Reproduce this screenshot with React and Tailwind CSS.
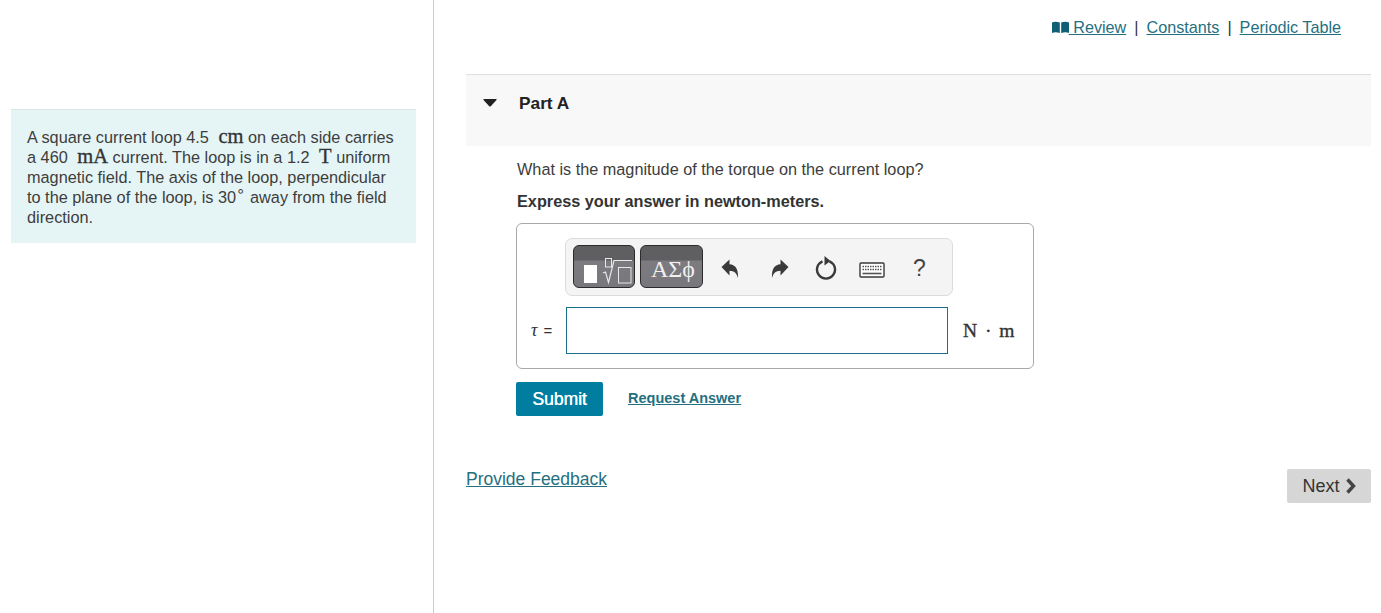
import React from "react";

const sans = { fontFamily: '"Liberation Sans", Arial, sans-serif' };

function Unit({ children, className = "" }) {
  return <span className={`font-['Liberation_Serif','DejaVu_Serif',serif] font-normal text-[20.5px] leading-[14px] text-[#333] [-webkit-text-stroke:0.35px_#333] ${className}`}>{children}</span>;
}

function Toolbar() {
  return (
    <div className="flex items-center h-[58px] w-[388px] ml-[48px] mt-[14px] pl-[7px] bg-[#f4f4f4] border border-[#dcdcdc] rounded-[7px]">
      <button className="relative shrink-0 w-[62px] h-[43px] mb-[1px] rounded-[6px] border border-[#2b2b2b] bg-[linear-gradient(#5f5f62_0,#5f5f62_14px,#7b7b80_15px,#77777c_100%)] overflow-hidden">
        <svg className="absolute left-0 top-0" width="60" height="41" viewBox="0 0 60 41" fill="none">
          <rect x="10" y="19" width="13" height="18" fill="#fff" />
          <rect x="31.500" y="12.500" width="6" height="8.500" stroke="#e8e8e8" strokeWidth="1" />
          <path d="M29 27l2.500-1 3 10.500L40 14.500h18" stroke="#e8e8e8" strokeWidth="1.200" />
          <rect x="44.500" y="21.500" width="12.500" height="15.500" stroke="#e8e8e8" strokeWidth="1" />
        </svg>
      </button>
      <button className="ml-[5px] pl-[3px] shrink-0 w-[63px] h-[43px] mb-[1px] rounded-[6px] border border-[#2b2b2b] bg-[linear-gradient(#5f5f62_0,#5f5f62_14px,#7b7b80_15px,#77777c_100%)] font-['Liberation_Serif',serif] text-[24px] leading-[46px] text-[#f0f0f0] text-center whitespace-nowrap">
        ΑΣϕ
      </button>
      <svg className="ml-[18px] mt-[3px] shrink-0" width="18" height="20" viewBox="0 0 18 20">
        <path d="M.5 8 8.500 .5v4.700c5.500 .3 9 4 8.500 13.800-1.500-5.200-3.700-7.200-8.500-7.300v4.800z" fill="#3a3a3a" />
      </svg>
      <svg className="ml-[32px] mt-[3px] shrink-0" width="18" height="20" viewBox="0 0 18 20">
        <path d="M17.500 8 9.500 .5v4.700c-5.500 .3-9 4-8.500 13.800 1.500-5.200 3.700-7.200 8.500-7.300v4.800z" fill="#3a3a3a" />
      </svg>
      <svg className="ml-[26px] mt-[1px] shrink-0" width="22" height="26" viewBox="0 0 22 26" fill="none">
        <path d="M7.500 6.300a9 9 0 1 0 7 0" stroke="#3a3a3a" strokeWidth="2.400" />
        <path d="M9.500 1v9.500L15.500 6z" fill="#3a3a3a" />
      </svg>
      <svg className="ml-[22px] mt-[5px] shrink-0" width="26" height="16" viewBox="0 0 26 16" fill="none">
        <rect x="1" y="1" width="24" height="14" rx="1" fill="#fff" stroke="#3a3a3a" strokeWidth="1.400" />
        <path d="M3.500 4.500h19M3.500 7.500h19" stroke="#555" strokeWidth="1.600" strokeDasharray="1.500 1" />
        <path d="M3.500 11.500h19" stroke="#555" strokeWidth="1.600" />
      </svg>
      <span style={sans} className="ml-[28px] mt-[3px] text-[23px] leading-none text-[#444]">?</span>
    </div>
  );
}

export default function App() {
  return (
    <div style={sans} className="flex w-[1381px] h-[613px] overflow-hidden bg-white text-[16.25px] text-[#333]">
      <aside className="w-[434px] h-full shrink-0 border-r border-[#b9cfe0] pt-[109px] pl-[11px]">
        <div className="w-[405px] h-[134px] bg-[#e5f5f6] border-t border-[#d9e6e6] pt-[17px] pl-[16px] text-[16.3px] leading-[20px] text-[#3d3d3d]">
          <p className="h-[20px] whitespace-nowrap">A square current loop 4.5 <Unit className="ml-[5px]">cm</Unit> on each side carries</p>
          <p className="h-[20px] whitespace-nowrap">a 460 <Unit className="ml-[5px]">mA</Unit> current. The loop is in a 1.2 <Unit className="ml-[5px]">T</Unit> uniform</p>
          <p className="h-[20px] whitespace-nowrap">magnetic field. The axis of the loop, perpendicular</p>
          <p className="h-[20px] whitespace-nowrap">to the plane of the loop, is 30<sup className="font-['DejaVu_Sans',sans-serif] text-[15px] leading-none">∘</sup> away from the field</p>
          <p className="h-[20px]">direction.</p>
        </div>
      </aside>

      <main className="flex-1 min-w-0 pl-[32px] pr-[10px]">
        <nav className="h-[74px] flex items-start justify-end whitespace-nowrap pt-[17px] pr-[30px] text-[16.2px] leading-[20px] text-[#333]">
          <a className="flex items-center h-[20px] text-[#25707f] underline">
            <svg width="17" height="12" viewBox="0 0 17 12" className="shrink-0">
              <path d="M0 1.500c2-1 5-1 7.800 0V12C5 11 2 11 0 12zM9.200 1.500c2.800-1 5.800-1 7.800 0V12c-2-1-5-1-7.800 0z" fill="#0f5f75" />
            </svg>
            <span className="whitespace-pre"> Review</span>
          </a>
          <span className="mx-[8px]">|</span>
          <a className="text-[#25707f] underline">Constants</a>
          <span className="mx-[8px]">|</span>
          <a className="text-[#25707f] underline">Periodic Table</a>
        </nav>

        <section>
          <div className="h-[72px] bg-[#f8f8f8] border-t border-[#dedede] flex items-start pt-[18px] pl-[17px]">
            <svg width="14" height="8" viewBox="0 0 14 8" className="mt-[6px]">
              <path d="M1 0h12q1 0 .5 1L8 7q-1 1-2 0L.5 1Q0 0 1 0z" fill="#222" />
            </svg>
            <h2 className="ml-[22px] text-[17.3px] leading-[20px] font-bold text-[#222]">Part A</h2>
          </div>

          <div className="pl-[50px]">
            <p className="mt-[13px] ml-[1px] leading-[20px] text-[#3d3d3d]">What is the magnitude of the torque on the current loop?</p>
            <p className="mt-[12px] ml-[1px] leading-[20px] font-bold text-[#333]">Express your answer in newton-meters.</p>

            <div className="mt-[12px] w-[518px] h-[146px] border border-[#a8a8a8] rounded-[6px]">
              <Toolbar />
              <div className="flex items-center mt-[11px]">
                <span className="w-[49px] pl-[14px] whitespace-nowrap text-[15px] text-[#333]"><i className="font-['Liberation_Serif',serif] text-[18px]">τ</i><span className="ml-[6px]">=</span></span>
                <input aria-label="answer" className="w-[382px] h-[47px] border border-[#1c6f8a] bg-white outline-none" />
                <Unit className="ml-[15px] whitespace-nowrap !text-[19.500px] [-webkit-text-stroke:0.2px_#333]">N <span className="mx-[3px]">·</span> m</Unit>
              </div>
            </div>

            <div className="flex items-center mt-[13px]">
              <button className="w-[87px] h-[34px] bg-[#007d9f] rounded-[2px] text-white text-[17.500px] font-normal [text-shadow:0.4px_0_0_#fff]">Submit</button>
              <a className="ml-[25px] text-[14.500px] font-bold text-[#25707f] underline">Request Answer</a>
            </div>
          </div>

          <div className="flex justify-between items-start mt-[52px]">
            <a className="text-[17.500px] leading-[22px] text-[#25707f] underline">Provide Feedback</a>
            <button className="flex items-center justify-center w-[84px] h-[34px] mt-[1px] pl-[1px] bg-[#d6d6d6] rounded-[2px] text-[18px] text-[#333]">
              Next
              <svg width="12" height="16" viewBox="0 0 12 16" className="ml-[5px]">
                <path d="M2.500 1.500 8.500 8l-6 6.500" fill="none" stroke="#444" strokeWidth="3.400" />
              </svg>
            </button>
          </div>
        </section>
      </main>
    </div>
  );
}
